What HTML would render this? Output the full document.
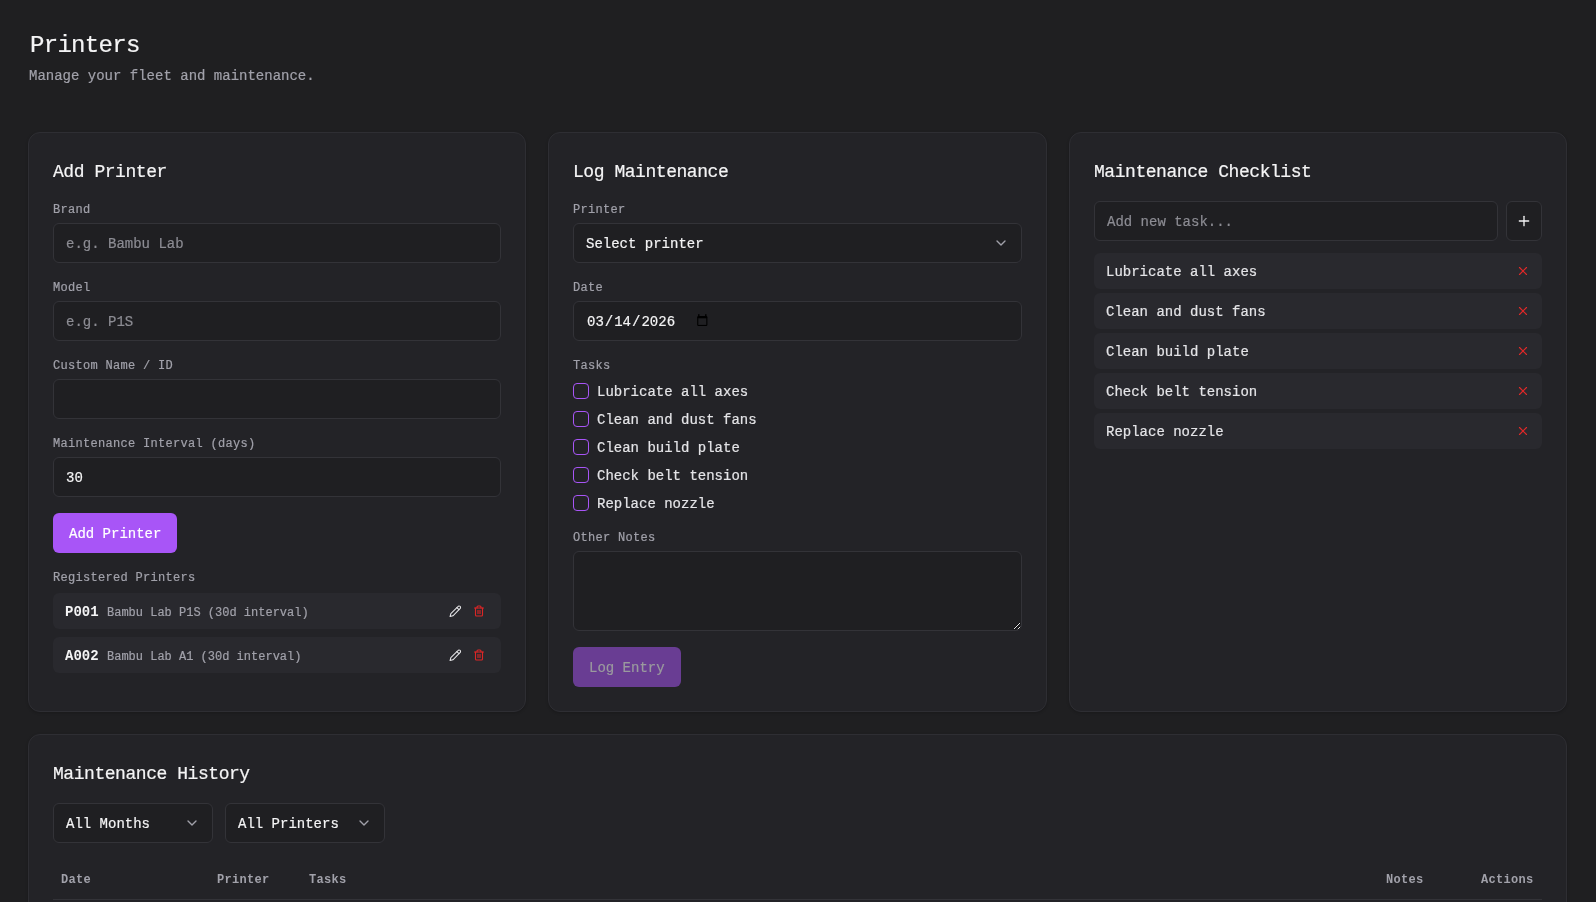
<!DOCTYPE html>
<html>
<head>
<meta charset="utf-8">
<style>
*{box-sizing:border-box;margin:0;padding:0}
html,body{width:1596px;height:902px;overflow:hidden;background:#1f1f21;color:#f4f4f5;font-family:"Liberation Mono",monospace}
.t{position:absolute;white-space:nowrap;line-height:1;will-change:transform;-webkit-text-stroke:0.2px currentColor}
.h1{font-size:24px;color:#f4f4f5;letter-spacing:-0.7px}
.sub{font-size:14px;color:#a1a1aa}
.card{position:absolute;background:#232327;border:1px solid #2e2e33;border-radius:12px;box-shadow:0 1px 3px rgba(0,0,0,.2)}
.ct{font-size:18px;color:#f4f4f5;letter-spacing:-0.45px}
.lbl{font-size:12px;color:#a1a1aa;letter-spacing:0.3px}
.inp{position:absolute;height:40px;background:#1f1f22;border:1px solid #333338;border-radius:6px}
.ph{font-size:14px;color:#8c8c93}
.v{font-size:14px;color:#f4f4f5}
.btn{position:absolute;height:40px;background:#a855f7;border-radius:6px}
.row{position:absolute;height:36px;background:#29292e;border-radius:6px}
.cb{position:absolute;width:16px;height:16px;border:1px solid #a855f7;border-radius:4px}
.task{font-size:14px;color:#e4e4e7}
.th{font-size:12px;color:#a1a1aa;font-weight:bold;letter-spacing:0.3px;-webkit-text-stroke:0}
svg{position:absolute;overflow:visible}
</style>
</head>
<body>
<div class="t h1" style="left:29.5px;top:34.1px">Printers</div>
<div class="t sub" style="left:29px;top:69.3px">Manage your fleet and maintenance.</div>

<!-- Card 1 -->
<div class="card" style="left:28px;top:132px;width:498px;height:580px"></div>
<div class="t ct" style="left:53px;top:162.7px">Add Printer</div>
<div class="t lbl" style="left:53px;top:204px">Brand</div>
<div class="inp" style="left:53px;top:223px;width:448px"></div>
<div class="t ph" style="left:66px;top:237.3px">e.g. Bambu Lab</div>
<div class="t lbl" style="left:53px;top:282px">Model</div>
<div class="inp" style="left:53px;top:301px;width:448px"></div>
<div class="t ph" style="left:66px;top:315.3px">e.g. P1S</div>
<div class="t lbl" style="left:53px;top:360px">Custom Name / ID</div>
<div class="inp" style="left:53px;top:379px;width:448px"></div>
<div class="t lbl" style="left:53px;top:438px">Maintenance Interval (days)</div>
<div class="inp" style="left:53px;top:457px;width:448px"></div>
<div class="t v" style="left:66px;top:471.3px">30</div>
<div class="btn" style="left:53px;top:513px;width:124px"></div>
<div class="t v" style="left:69px;top:526.8px;color:#fff">Add Printer</div>
<div class="t lbl" style="left:53px;top:572.3px">Registered Printers</div>
<div class="row" style="left:53px;top:593px;width:448px"></div>
<div class="t v" style="left:65px;top:605px;font-weight:bold;-webkit-text-stroke:0">P001</div>
<div class="t" style="left:107px;top:607px;font-size:12px;color:#a1a1aa">Bambu Lab P1S (30d interval)</div>
<div class="row" style="left:53px;top:637px;width:448px"></div>
<div class="t v" style="left:65px;top:649px;font-weight:bold;-webkit-text-stroke:0">A002</div>
<div class="t" style="left:107px;top:651px;font-size:12px;color:#a1a1aa">Bambu Lab A1 (30d interval)</div>
<!-- pencil + trash icons -->
<svg style="left:448.8px;top:604.6px" width="12.6" height="12.6" viewBox="0 0 24 24" fill="none" stroke="#e4e4e7" stroke-width="2" stroke-linecap="round" stroke-linejoin="round"><path d="M17 3a2.85 2.83 0 1 1 4 4L7.5 20.5 2 22l1.5-5.5Z"/><path d="m15 5 4 4"/></svg>
<svg style="left:473px;top:605px" width="12" height="12" viewBox="0 0 24 24" fill="none" stroke="#dc2626" stroke-width="2.2" stroke-linecap="round" stroke-linejoin="round"><path d="M3 6h18"/><path d="M19 6v14c0 1-1 2-2 2H7c-1 0-2-1-2-2V6"/><path d="M8 6V4c0-1 1-2 2-2h4c1 0 2 1 2 2v2"/><line x1="10" x2="10" y1="11" y2="17"/><line x1="14" x2="14" y1="11" y2="17"/></svg>
<svg style="left:448.8px;top:648.6px" width="12.6" height="12.6" viewBox="0 0 24 24" fill="none" stroke="#e4e4e7" stroke-width="2" stroke-linecap="round" stroke-linejoin="round"><path d="M17 3a2.85 2.83 0 1 1 4 4L7.5 20.5 2 22l1.5-5.5Z"/><path d="m15 5 4 4"/></svg>
<svg style="left:473px;top:649px" width="12" height="12" viewBox="0 0 24 24" fill="none" stroke="#dc2626" stroke-width="2.2" stroke-linecap="round" stroke-linejoin="round"><path d="M3 6h18"/><path d="M19 6v14c0 1-1 2-2 2H7c-1 0-2-1-2-2V6"/><path d="M8 6V4c0-1 1-2 2-2h4c1 0 2 1 2 2v2"/><line x1="10" x2="10" y1="11" y2="17"/><line x1="14" x2="14" y1="11" y2="17"/></svg>

<!-- Card 2 -->
<div class="card" style="left:548px;top:132px;width:499px;height:580px"></div>
<div class="t ct" style="left:573px;top:162.7px">Log Maintenance</div>
<div class="t lbl" style="left:573px;top:204px">Printer</div>
<div class="inp" style="left:573px;top:223px;width:449px"></div>
<div class="t v" style="left:586px;top:237.3px">Select printer</div>
<svg style="left:993px;top:235px" width="16" height="16" viewBox="0 0 24 24" fill="none" stroke="#a1a1aa" stroke-width="2" stroke-linecap="round" stroke-linejoin="round"><path d="m6 9 6 6 6-6"/></svg>
<div class="t lbl" style="left:573px;top:282px">Date</div>
<div class="inp" style="left:573px;top:301px;width:449px"></div>
<div class="t v" style="left:587px;top:315.3px">03<span style="margin:0 1px">/</span>14<span style="margin:0 1px">/</span>2026</div>
<svg style="left:697px;top:314px" width="11" height="13" viewBox="0 0 11 13"><rect x="0.2" y="2" width="10.2" height="10" rx="1.2" fill="#000"/><rect x="1.3" y="4.3" width="8" height="6.6" fill="#1f1f22"/><rect x="1.1" y="0.2" width="1.4" height="2.5" fill="#000"/><rect x="8.1" y="0.2" width="1.4" height="2.5" fill="#000"/></svg>
<div class="t lbl" style="left:573px;top:360px">Tasks</div>
<div class="cb" style="left:573px;top:383px"></div>
<div class="t task" style="left:597px;top:384.7px">Lubricate all axes</div>
<div class="cb" style="left:573px;top:411px"></div>
<div class="t task" style="left:597px;top:412.7px">Clean and dust fans</div>
<div class="cb" style="left:573px;top:439px"></div>
<div class="t task" style="left:597px;top:440.7px">Clean build plate</div>
<div class="cb" style="left:573px;top:467px"></div>
<div class="t task" style="left:597px;top:468.7px">Check belt tension</div>
<div class="cb" style="left:573px;top:495px"></div>
<div class="t task" style="left:597px;top:496.7px">Replace nozzle</div>
<div class="t lbl" style="left:573px;top:532.3px">Other Notes</div>
<div class="inp" style="left:573px;top:551px;width:449px;height:80px"></div>
<svg style="left:1012px;top:621px" width="10" height="10" viewBox="0 0 10 10" fill="none"><path d="M2 8 8 2M5.8 8.2 8.2 5.8" stroke="#000" stroke-width="2" stroke-opacity=".5"/><path d="M2 8 8 2M5.8 8.2 8.2 5.8" stroke="#e4e4e7" stroke-width="1"/></svg>
<div class="btn" style="left:573px;top:647px;width:108px;background:#693d93"></div>
<div class="t v" style="left:589px;top:660.7px;color:#9a9a9e">Log Entry</div>

<!-- Card 3 -->
<div class="card" style="left:1069px;top:132px;width:498px;height:580px"></div>
<div class="t ct" style="left:1094px;top:162.7px">Maintenance Checklist</div>
<div class="inp" style="left:1094px;top:201px;width:404px"></div>
<div class="t ph" style="left:1107px;top:215px">Add new task...</div>
<div class="inp" style="left:1506px;top:201px;width:36px"></div>
<svg style="left:1516px;top:213px" width="16" height="16" viewBox="0 0 24 24" fill="none" stroke="#f4f4f5" stroke-width="2" stroke-linecap="round" stroke-linejoin="round"><path d="M5 12h14"/><path d="M12 5v14"/></svg>
<div class="row" style="left:1094px;top:253px;width:448px"></div>
<div class="t task" style="left:1106px;top:265.3px">Lubricate all axes</div>
<div class="row" style="left:1094px;top:293px;width:448px"></div>
<div class="t task" style="left:1106px;top:305.3px">Clean and dust fans</div>
<div class="row" style="left:1094px;top:333px;width:448px"></div>
<div class="t task" style="left:1106px;top:345.3px">Clean build plate</div>
<div class="row" style="left:1094px;top:373px;width:448px"></div>
<div class="t task" style="left:1106px;top:385.3px">Check belt tension</div>
<div class="row" style="left:1094px;top:413px;width:448px"></div>
<div class="t task" style="left:1106px;top:425.3px">Replace nozzle</div>
<svg style="left:1516px;top:264px" width="14" height="14" viewBox="0 0 24 24" fill="none" stroke="#e02929" stroke-width="2" stroke-linecap="round" stroke-linejoin="round"><path d="M18 6 6 18"/><path d="m6 6 12 12"/></svg>
<svg style="left:1516px;top:304px" width="14" height="14" viewBox="0 0 24 24" fill="none" stroke="#e02929" stroke-width="2" stroke-linecap="round" stroke-linejoin="round"><path d="M18 6 6 18"/><path d="m6 6 12 12"/></svg>
<svg style="left:1516px;top:344px" width="14" height="14" viewBox="0 0 24 24" fill="none" stroke="#e02929" stroke-width="2" stroke-linecap="round" stroke-linejoin="round"><path d="M18 6 6 18"/><path d="m6 6 12 12"/></svg>
<svg style="left:1516px;top:384px" width="14" height="14" viewBox="0 0 24 24" fill="none" stroke="#e02929" stroke-width="2" stroke-linecap="round" stroke-linejoin="round"><path d="M18 6 6 18"/><path d="m6 6 12 12"/></svg>
<svg style="left:1516px;top:424px" width="14" height="14" viewBox="0 0 24 24" fill="none" stroke="#e02929" stroke-width="2" stroke-linecap="round" stroke-linejoin="round"><path d="M18 6 6 18"/><path d="m6 6 12 12"/></svg>

<!-- History -->
<div class="card" style="left:28px;top:734px;width:1539px;height:300px"></div>
<div class="t ct" style="left:53px;top:765.2px">Maintenance History</div>
<div class="inp" style="left:53px;top:803px;width:160px"></div>
<div class="t v" style="left:66px;top:817px">All Months</div>
<svg style="left:184px;top:815px" width="16" height="16" viewBox="0 0 24 24" fill="none" stroke="#a1a1aa" stroke-width="2" stroke-linecap="round" stroke-linejoin="round"><path d="m6 9 6 6 6-6"/></svg>
<div class="inp" style="left:225px;top:803px;width:160px"></div>
<div class="t v" style="left:238px;top:817px">All Printers</div>
<svg style="left:356px;top:815px" width="16" height="16" viewBox="0 0 24 24" fill="none" stroke="#a1a1aa" stroke-width="2" stroke-linecap="round" stroke-linejoin="round"><path d="m6 9 6 6 6-6"/></svg>
<div class="t th" style="left:61px;top:873.6px">Date</div>
<div class="t th" style="left:217px;top:873.6px">Printer</div>
<div class="t th" style="left:309px;top:873.6px">Tasks</div>
<div class="t th" style="left:1386px;top:873.6px">Notes</div>
<div class="t th" style="left:1481px;top:873.6px">Actions</div>
<div style="position:absolute;left:53px;top:899px;width:1489px;height:1px;background:#333338"></div>
</body>
</html>
